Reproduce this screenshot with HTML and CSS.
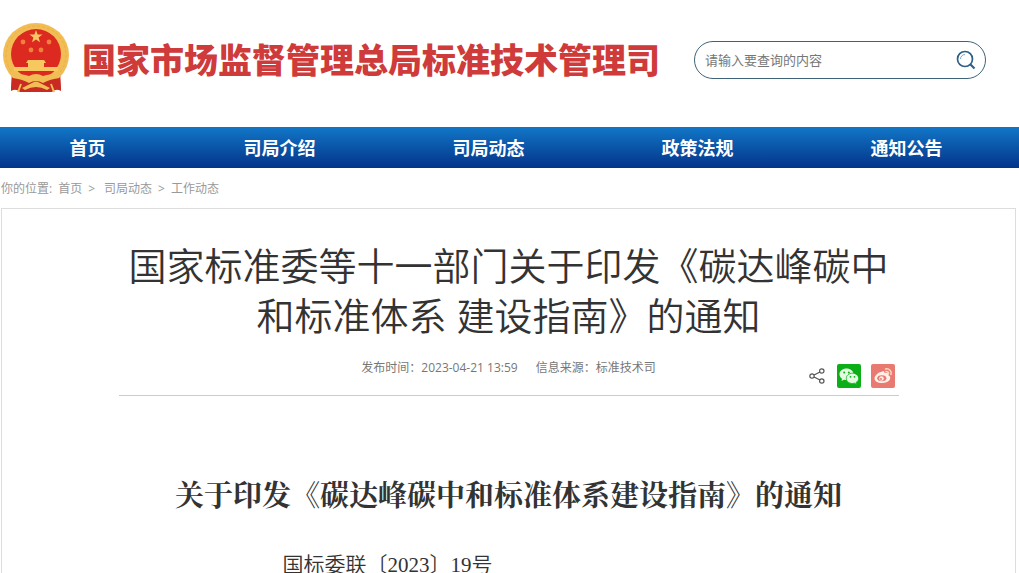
FILE: index.html
```html
<!DOCTYPE html>
<html lang="zh-CN">
<head>
    <meta charset="UTF-8">
    <title>国家市场监督管理总局标准技术管理司</title>
    <link rel="stylesheet" href="styles.css">
</head>
<body>
    <header class="header">
        <a class="brand" href="#">
            <svg class="emblem" viewBox="0 0 68 76" aria-hidden="true">
                <path d="M10 48 L9 68 Q14 65 20 70 H48 Q54 65 59 68 L58 48 Z" fill="#c92a22"/>
                <ellipse cx="34" cy="33" rx="33" ry="32" fill="#f2bd55"/>
                <ellipse cx="34" cy="33" rx="30" ry="29" fill="none" stroke="#ecb048" stroke-dasharray="3 2"/>
                <circle cx="34" cy="32" r="25" fill="#dc2a20"/>
                <path d="M34 8 l1.600 4.600 h4.900 l-3.900 2.900 1.400 4.700 -4-2.800 -4 2.800 1.400-4.700 -3.900-2.900 h4.900z" fill="#f7c860"/>
                <g fill="#f0803c">
                    <circle cx="21" cy="20" r="2.400"/>
                    <circle cx="47" cy="20" r="2.400"/>
                    <circle cx="29" cy="28" r="2.400"/>
                    <circle cx="39" cy="28" r="2.400"/>
                </g>
                <path d="M26 38 h16 l2 3 h-2 v4 h14 v4 H12 v-4 h14 v-4 h-2z" fill="#f7c860"/>
                <path d="M9 51 Q20 52 27 54 Q34 50 41 54 Q48 52 59 51 L56 58 Q46 57 41 60 Q34 56 27 60 Q22 57 12 58z" fill="#f2bd55"/>
                <path d="M10 56 Q20 57 27 61 Q34 57 41 61 Q48 57 58 56 L59 69 Q54 66 50 70 H18 Q14 66 9 69z" fill="#c92a22"/>
                <path d="M20 66 L30 61 Q34 58 38 61 L48 66 L45 68 Q34 62 23 68z" fill="#f2bd55"/>
                <path d="M19 62 l-3 8 M49 62 l3 8" stroke="#f2bd55" stroke-width="2"/>
            </svg>
            <span class="brand-name">国家市场监督管理总局标准技术管理司</span>
        </a>
        <form class="search">
            <input class="search-input" type="text" placeholder="请输入要查询的内容" aria-label="请输入要查询的内容">
            <button class="search-button" type="submit" aria-label="搜索">
                <svg viewBox="0 0 20 20" width="20" height="20" fill="none" stroke="#2f5f86">
                    <circle cx="9" cy="9" r="7.500" stroke-width="1.700"/>
                    <path d="M4.500 9 A4.500 4.500 0 0 1 9 4.500" stroke="#7fa6c4"/>
                    <path d="M14.500 14.500 L18.500 18.500" stroke-width="2.200"/>
                </svg>
            </button>
        </form>
    </header>

    <nav class="nav">
        <a href="#">首页</a>
        <a href="#">司局介绍</a>
        <a href="#">司局动态</a>
        <a href="#">政策法规</a>
        <a href="#">通知公告</a>
    </nav>

    <div class="crumbs">
        <span>你的位置:</span>
        <a href="#">首页</a>
        <span>&gt;</span>
        <a class="crumb-section" href="#">司局动态</a>
        <span>&gt;</span>
        <a href="#">工作动态</a>
    </div>

    <main class="article">
        <div class="article-head">
            <h1>国家标准委等十一部门关于印发《碳达峰碳中<br>和标准体系 建设指南》的通知</h1>
            <div class="info">
                <p class="meta">
                    <span>发布时间：2023-04-21 13:59</span>
                    <span>信息来源：标准技术司</span>
                </p>
                <div class="share">
                    <button class="share-more" type="button" aria-label="分享">
                        <svg viewBox="0 0 16 16" width="16" height="16" fill="none" stroke="#555" stroke-width="1.200">
                            <path d="M5 7 L11 4 M5 9 L11 12"/>
                            <circle cx="3" cy="8" r="2.200"/>
                            <circle cx="12.800" cy="3" r="2.200"/>
                            <circle cx="12.800" cy="13" r="2.200"/>
                        </svg>
                    </button>
                    <button class="share-wechat" type="button" aria-label="分享到微信">
                        <svg viewBox="0 0 24 24" width="24" height="24">
                            <path d="M9.500 4.500 C5.500 4.500 2.500 7 2.500 10.200 c0 1.900 1 3.500 2.600 4.600 l-.7 2.200 2.600-1.300 c.8.2 1.600.3 2.500.3 4 0 7-2.600 7-5.800 s-3-5.700-7-5.700z" fill="#e4fae0"/>
                            <path d="M15.500 9.200 c-3.500 0-6.200 2.300-6.200 5.200 s2.700 5.100 6.200 5.100 c.7 0 1.400-.1 2-.3 l2.200 1.200 -.6-1.900 c1.500-1 2.500-2.400 2.500-4.100 0-2.900-2.700-5.200-6.100-5.200z" fill="#e4fae0" stroke="#0cae18" stroke-width=".8"/>
                            <g fill="#0cae18">
                                <circle cx="7.200" cy="8.500" r="1"/>
                                <circle cx="11.800" cy="8.500" r="1"/>
                                <circle cx="13.500" cy="12.800" r=".9"/>
                                <circle cx="17.500" cy="12.800" r=".9"/>
                            </g>
                        </svg>
                    </button>
                    <button class="share-weibo" type="button" aria-label="分享到微博">
                        <svg viewBox="0 0 24 24" width="24" height="24">
                            <path d="M10 8 c2-1.200 4-.8 3.400 1.300 2.300-.9 4.600-.6 3.900 1.900 4 1.400 2 7.800-6.300 7.800 -4.500 0-7.500-2-7.500-4.800 C3.500 12 7 8.500 10 8z" fill="#fff0ea"/>
                            <ellipse cx="10.800" cy="14.200" rx="4.600" ry="3" fill="#e87a72"/>
                            <circle cx="10.500" cy="14.500" r="2.300" fill="#fff0ea"/>
                            <circle cx="10" cy="15" r="1" fill="#e87a72"/>
                            <path d="M14.500 5 c3.800-.8 6.500 2.200 5.500 5.500 M15 7.600 c1.800-.3 2.900.9 2.500 2.500" fill="none" stroke="#ffd9bd" stroke-width="1.500" stroke-linecap="round"/>
                        </svg>
                    </button>
                </div>
            </div>
        </div>
        <div class="article-body">
            <h2>关于印发《碳达峰碳中和标准体系建设指南》的通知</h2>
            <p class="doc-number">国标委联〔2023〕19号</p>
        </div>
    </main>
</body>
</html>
```
FILE: styles.css
```css
* {
    box-sizing: border-box;
}

body {
    margin: 0;
    font-family: "Open Sans", "Noto Sans CJK SC", sans-serif;
    color: #333;
    background-color: #fff;
}

a {
    color: inherit;
    text-decoration: none;
}

button {
    display: flex;
    padding: 0;
    border: none;
    background: none;
    cursor: pointer;
}

.header {
    display: flex;
    align-items: center;
    justify-content: space-between;
    padding: 22px 33px 29px 2px;
}

.brand {
    display: flex;
    align-items: center;
    gap: 12px;
}

.emblem {
    width: 68px;
    height: 76px;
}

.brand-name {
    font-size: 34px;
    line-height: 50px;
    font-weight: 900;
    color: #cf3a3a;
    white-space: nowrap;
}

.search {
    display: flex;
    align-items: center;
    width: 292px;
    height: 38px;
    padding: 0 9px 0 10px;
    border: 1px solid #3f6378;
    border-radius: 19px;
}

.search-input {
    flex: 1;
    min-width: 0;
    padding: 0;
    border: none;
    outline: none;
    background: none;
    font-family: inherit;
    font-size: 13px;
}

.search-input::placeholder {
    color: #777;
}

.nav {
    display: grid;
    grid-template-columns: 175fr repeat(4, 209fr);
    padding: 1px 8px 0 0;
    background: linear-gradient(#1277c8, #0a55a8 50%, #04348a);
    color: #fff;
    font-size: 18px;
    font-weight: 700;
    line-height: 40px;
    text-align: center;
}

.crumbs {
    display: flex;
    gap: 6px;
    padding: 12px 1px 10px;
    font-size: 12px;
    line-height: 18px;
    color: #999;
}

.crumb-section {
    margin-left: 3px;
}

.article {
    margin: 0 3px 0 1px;
    padding: 31px 24px 0;
    border: 1px solid #ddd;
    border-bottom: none;
}

.article-head {
    max-width: 780px;
    margin: 0 auto;
    border-bottom: 1px solid #ccc;
}

h1 {
    margin: 0;
    font-size: 38px;
    line-height: 50px;
    font-weight: 350;
    text-align: center;
    white-space: nowrap;
}

.info {
    display: grid;
    grid-template-columns: 1fr auto 1fr;
    padding: 16px 4px 7px;
}

.meta {
    grid-column: 2;
    display: flex;
    gap: 18px;
    margin: 0;
    font-size: 12px;
    line-height: 24px;
    color: #777;
}

.share {
    display: flex;
    align-items: center;
    justify-content: flex-end;
    gap: 10px;
    padding-top: 8px;
}

.share-more {
    margin-right: 2px;
}

.share-wechat {
    border-radius: 2px;
    background-color: #0cae18;
}

.share-weibo {
    border-radius: 2px;
    background-color: #e87a72;
}

.article-body {
    max-width: 780px;
    margin: 0 auto;
    padding-top: 79px;
    font-family: "Liberation Serif", "Noto Serif CJK SC", "Noto Sans CJK SC", serif;
}

h2 {
    margin: 0;
    font-size: 29px;
    line-height: 42px;
    font-weight: 700;
    text-align: center;
    white-space: nowrap;
}

.doc-number {
    margin: 34px 0 0;
    padding-left: 164px;
    font-family: "Liberation Serif", "Noto Sans CJK SC", serif;
    font-size: 21px;
    font-weight: 350;
    line-height: 28px;
}
```
